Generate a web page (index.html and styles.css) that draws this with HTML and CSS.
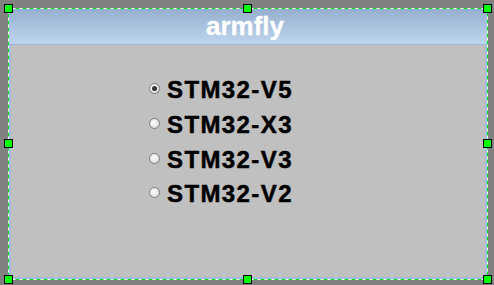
FILE: index.html
```html
<!DOCTYPE html>
<html lang="en">
<head>
    <meta charset="UTF-8">
    <meta name="viewport" content="width=device-width, initial-scale=1.0">
    <title>armfly</title>
    <link rel="stylesheet" href="styles.css">
</head>
<body>
    <div class="stage">
        <div class="window">
            <div class="title">armfly</div>
            <div class="client">
                <div class="radio-list">
                    <div class="radio-row"><span class="radio checked"></span>STM32-V5</div>
                    <div class="radio-row"><span class="radio"></span>STM32-X3</div>
                    <div class="radio-row"><span class="radio"></span>STM32-V3</div>
                    <div class="radio-row"><span class="radio"></span>STM32-V2</div>
                </div>
            </div>
        </div>

        <!-- selection frame drawn over the window -->
        <svg class="select-frame" width="494" height="285" viewBox="0 0 494 285">
            <rect x="8.5" y="8.5" width="479" height="271" fill="none" stroke="#ffffff" stroke-width="1"/>
            <rect x="8.5" y="8.5" width="479" height="271" fill="none" stroke="#00e020" stroke-width="1" stroke-dasharray="4 3"/>
        </svg>
        <div class="handle" style="left:4px;top:4px"></div>
        <div class="handle" style="left:243px;top:4px"></div>
        <div class="handle" style="left:483px;top:4px"></div>
        <div class="handle" style="left:4px;top:139px"></div>
        <div class="handle" style="left:483px;top:139px"></div>
        <div class="handle" style="left:4px;top:275px"></div>
        <div class="handle" style="left:243px;top:275px"></div>
        <div class="handle" style="left:483px;top:275px"></div>
    </div>
</body>
</html>
```

FILE: styles.css
```css
body {
    margin: 0;
    background-color: #808080;
    font-family: "Liberation Sans", Arial, sans-serif;
}
.stage {
    position: relative;
    width: 494px;
    height: 285px;
    overflow: hidden;
}
.window {
    position: relative;
    top: 9px;
    left: 9px;
    width: 478px;
    height: 270px;
    box-sizing: border-box;
    border: 2px solid #a3bedb;
    border-top: none;
    background-color: #c0c0c0;
    display: flex;
    flex-direction: column;
}
.title {
    height: 35px;
    margin: 0 -2px;
    padding-right: 6px;
    border-bottom: 1px solid #9bb8d8;
    background: linear-gradient(#95afce, #bed5ed);
    color: #ffffff;
    font-weight: bold;
    font-size: 26px;
    line-height: 35px;
    text-align: center;
    -webkit-text-stroke: 0.3px #ffffff;
}
.client {
    flex: 1;
    padding: 28px 0 0 138px;
}
.radio-row {
    display: flex;
    align-items: center;
    height: 34.7px;
    font-size: 24px;
    font-weight: bold;
    letter-spacing: 1.4px;
    color: #000000;
    -webkit-text-stroke: 0.5px #000000;
}
.radio {
    width: 11px;
    height: 11px;
    box-sizing: border-box;
    margin: -3px 7px 0 0;
    border: 1px solid #7c7c7c;
    border-radius: 50%;
    background: radial-gradient(circle at 40% 40%, #ffffff, #d0d0d0);
    position: relative;
}
.radio.checked::after {
    content: "";
    position: absolute;
    left: 2px;
    top: 2px;
    width: 5px;
    height: 5px;
    border-radius: 50%;
    background-color: #333333;
}
.select-frame {
    position: absolute;
    left: 0;
    top: 0;
}
.handle {
    position: absolute;
    width: 9px;
    height: 9px;
    box-sizing: border-box;
    border: 1px solid #000000;
    background-color: #00ff00;
}
```
